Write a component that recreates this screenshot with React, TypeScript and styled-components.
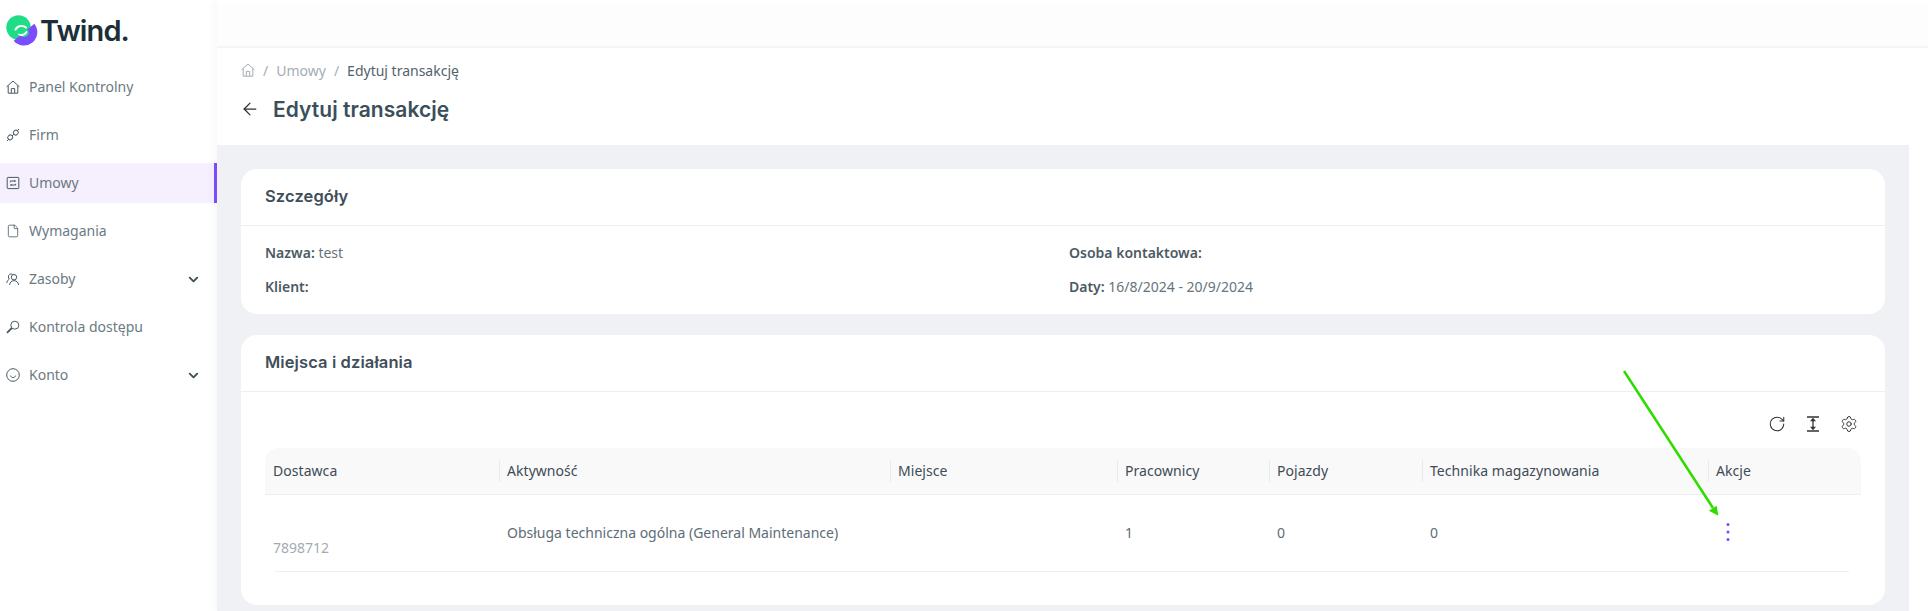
import React from 'react';
import styled, { createGlobalStyle } from 'styled-components';
import { ChevronDown, File, ArrowLeft, RotateCw, Settings } from 'lucide-react';

const GlobalStyle = createGlobalStyle`
    html, body {
        margin: 0;
        padding: 0;
        background: #fff;
    }
    body {
        font-family: 'Noto Sans', sans-serif;
        font-size: 13.5px;
        color: #5e6e78;
    }
`

const Page = styled.div`
    position: relative;
    display: flex;
    width: 1928px;
    height: 611px;
    overflow: hidden;
    background: #fff;
`

const Sidebar = styled.aside`
    width: 217px;
    flex-shrink: 0;
    box-sizing: border-box;
    background: #fff;
`

const LogoRow = styled.div`
    display: flex;
    align-items: center;
    gap: 0;
    height: 63px;
    padding: 0 0 2px 6px;
    box-sizing: border-box;
`

const LogoText = styled.span`
    font-family: 'Inter', sans-serif;
    font-weight: 600;
    font-size: 29px;
    letter-spacing: -0.9px;
    color: #1b2f38;
`

const Nav = styled.nav`
    display: flex;
    flex-direction: column;
    gap: 8px;
    padding-top: 4px;
`

const NavItem = styled.div<{ $active?: boolean }>`
    display: flex;
    align-items: center;
    height: 40px;
    box-sizing: border-box;
    padding: 0 13px 0 6px;
    gap: 9px;
    font-size: 14px;
    color: #6c7a82;
    background: ${(p) => (p.$active ? '#f5effe' : 'transparent')};
    border-right: 3px solid ${(p) => (p.$active ? '#7c4dff' : 'transparent')};
`

const NavIcon = styled.svg`
    width: 14px;
    height: 14px;
    flex-shrink: 0;
    fill: none;
    stroke: #4a5962;
    stroke-width: 1;
`

const NavLabel = styled.span`
    flex: 1;
    padding-bottom: 2px;
`

const Main = styled.main`
    flex: 1;
    min-width: 0;
    display: flex;
    flex-direction: column;
    box-shadow: -4px 0 8px rgba(60, 70, 90, 0.03);
`

const TopBar = styled.header`
    height: 44px;
    box-sizing: border-box;
    margin-top: 4px;
    background: #fdfdfd;
    border-bottom: 2px solid #f4f4f6;
`

const PageHead = styled.div`
    height: 97px;
    box-sizing: border-box;
    padding: 12px 0 0 24px;
    background: #fff;
`

const Crumbs = styled.div`
    display: flex;
    align-items: center;
    height: 20px;
    font-size: 14px;
    color: #a4adb4;
`

const Crumb = styled.span<{ $current?: boolean }>`
    color: ${(p) => (p.$current ? '#53626c' : '#a4adb4')};
`

const CrumbSep = styled.span`
    margin: 0 8px;
`

const TitleRow = styled.div`
    display: flex;
    align-items: center;
    gap: 13px;
    margin: 14px 0 0 -1px;
    height: 30px;
`

const Title = styled.h1`
    margin: 0;
    font-family: 'Inter', sans-serif;
    font-weight: 600;
    font-size: 21px;
    letter-spacing: 0.05px;
    color: #3b4f5b;
`

const Content = styled.div`
    flex: 1;
    width: 1692px;
    box-sizing: border-box;
    padding: 24px 24px 0;
    background: #eff1f5;
    display: flex;
    flex-direction: column;
    gap: 21px;
`

const Card = styled.section<{ $height: number }>`
    height: ${(p) => p.$height}px;
    box-sizing: border-box;
    background: #fff;
    border-radius: 16px;
`

const CardHead = styled.div`
    display: flex;
    align-items: center;
    height: 57px;
    box-sizing: border-box;
    padding: 0 0 2px 24px;
    border-bottom: 1px solid #eeeff2;
`

const CardTitle = styled.h2`
    margin: 0;
    font-family: 'Inter', sans-serif;
    font-weight: 600;
    font-size: 16.5px;
    letter-spacing: 0.1px;
    color: #3f4e59;
`

const Details = styled.div`
    display: grid;
    grid-template-columns: 804px 1fr;
    grid-auto-rows: 34px;
    align-items: center;
    padding: 9px 24px 0;
    font-size: 14px;
    color: #66747d;
`

const Key = styled.b`
    font-weight: 600;
    color: #4c5a64;
`

const TableWrap = styled.div`
    padding: 0 24px;
`

const Tools = styled.div`
    display: flex;
    justify-content: flex-end;
    align-items: center;
    gap: 18px;
    height: 56px;
    box-sizing: border-box;
    padding: 8px 3px 0 0;
    color: #333;
`

const Grid = styled.div`
    display: grid;
    grid-template-columns: 234px 391px 227px 152px 153px 286px 153px;
`

const HeadRow = styled(Grid)`
    height: 47px;
    box-sizing: border-box;
    background: #f9f9fa;
    border-bottom: 1px solid #eeeff2;
    border-radius: 14px 14px 0 0;
    align-items: center;
    color: #3f4b55;
    font-size: 14px;
    letter-spacing: 0.05px;
`

const HeadCell = styled.div<{ $first?: boolean }>`
    height: 22px;
    line-height: 22px;
    padding-left: 7px;
    border-left: 1px solid ${(p) => (p.$first ? 'transparent' : '#e9eaed')};
`

const BodyRow = styled(Grid)`
    height: 77px;
    box-sizing: border-box;
    padding-bottom: 2px;
    align-items: center;
    font-size: 14px;
    color: #5d6c76;
    position: relative;

    &::after {
        content: '';
        position: absolute;
        left: 10px;
        right: 12px;
        bottom: 0;
        height: 1px;
        background: #eeeff2;
    }
`

const BodyCell = styled.div`
    padding-left: 8px;
`

const SupplierCell = styled(BodyCell)`
    color: #a3abb2;
    padding-top: 30px;
`

const ActionCell = styled(BodyCell)`
    display: flex;
    padding: 0 0 2px 17px;
`

// zielona strzalka narysowana na screenshocie
const Annotation = styled.svg`
    position: absolute;
    left: 1615px;
    top: 360px;
    width: 120px;
    height: 170px;
    pointer-events: none;
`

const Logo = () => (
    <svg width="34" height="32" viewBox="0 0 34 32">
        <circle cx="12.500" cy="12.500" r="12.200" fill="#1fdc87" />
        <path d="M25 11.500A8.800 8.800 0 1 1 11 23" fill="none" stroke="#7c4dff" strokeWidth="8.500" />
        <path d="M9.500 14.500C11.500 10.500 17 10 20 12.500" fill="none" stroke="#fff" strokeWidth="2" strokeLinecap="round" />
        <path d="M13 19.500C16 20.500 19 19.500 20.500 17" fill="none" stroke="#fff" strokeWidth="1.800" strokeLinecap="round" />
    </svg>
)

const HomeIcon = ({ color }: { color?: string }) => (
    <NavIcon viewBox="0 0 14 14" style={color ? { stroke: color } : undefined}>
        <path d="M.6 6.800 7 1l6.400 5.800M2.200 5.600v7.600h9.600V5.600M5.300 13.200V8.600h3.400v4.600" />
    </NavIcon>
)

const PlugIcon = () => (
    <NavIcon viewBox="0 0 14 14">
        <path d="M1 13l1.800-1.800M13 1l-1.800 1.800" />
        <rect x="1.800" y="7.200" width="4.800" height="4.400" rx="1.800" transform="rotate(-45 4.200 9.400)" />
        <rect x="7.400" y="2.400" width="4.800" height="4.400" rx="1.800" transform="rotate(-45 9.800 4.600)" />
        <path d="M6 8l2-2" />
    </NavIcon>
)

const ContractIcon = () => (
    <NavIcon viewBox="0 0 14 14">
        <rect x="1.200" y="1.400" width="11.600" height="11.200" rx="0.800" />
        <path d="M4.400 6.200V5h5M8.400 4l1 1-1 1M9.600 7.800V9h-5M5.600 10l-1-1 1-1" />
    </NavIcon>
)

const PeopleIcon = () => (
    <NavIcon viewBox="0 0 14 14">
        <circle cx="8" cy="5.200" r="2.700" />
        <path d="M3.600 13c.3-2.600 2-4.400 4.400-4.400s4.200 1.800 4.600 4.400M6.600 2.400A2.700 2.700 0 0 0 2.400 5c0 .8.400 1.500 1 2C1.800 8 1 9.400.8 11" />
    </NavIcon>
)

const KeyIcon = () => (
    <NavIcon viewBox="0 0 14 14">
        <circle cx="8.800" cy="5.200" r="4" />
        <path d="M5.800 8 1 12.800" strokeWidth="1.800" />
    </NavIcon>
)

const SmileIcon = () => (
    <NavIcon viewBox="0 0 14 14">
        <circle cx="7" cy="7" r="6.300" />
        <path d="M4.400 7.600c.6 1.400 1.500 2 2.600 2s2-.6 2.600-2" />
    </NavIcon>
)

const HeightIcon = () => (
    <svg width="18" height="18" viewBox="0 0 18 18" fill="none" stroke="#333" strokeWidth="1.300">
        <path d="M3 2h12M3 16h12M9 4.500v9" />
        <path d="M7.500 5.500 9 3.800 10.500 5.500zM7.500 12.500 9 14.200 10.500 12.500z" fill="#333" />
    </svg>
)

const Dots = () => (
    <svg width="6" height="20" viewBox="0 0 6 20" fill="#7c4dff">
        <circle cx="3" cy="2.500" r="1.500" />
        <circle cx="3" cy="10" r="1.500" />
        <circle cx="3" cy="17.500" r="1.500" />
    </svg>
)

const navItems = [
    { label: 'Panel Kontrolny', icon: <HomeIcon /> },
    { label: 'Firm', icon: <PlugIcon /> },
    { label: 'Umowy', icon: <ContractIcon />, active: true },
    { label: 'Wymagania', icon: <File size={14} strokeWidth={1.300} color="#3f4f58" /> },
    { label: 'Zasoby', icon: <PeopleIcon />, arrow: true },
    { label: 'Kontrola dostępu', icon: <KeyIcon /> },
    { label: 'Konto', icon: <SmileIcon />, arrow: true },
]

const columns = ['Dostawca', 'Aktywność', 'Miejsce', 'Pracownicy', 'Pojazdy', 'Technika magazynowania', 'Akcje']

function App() {
    return (
        <Page>
            <GlobalStyle />
            <Sidebar>
                <LogoRow>
                    <Logo />
                    <LogoText>Twind.</LogoText>
                </LogoRow>
                <Nav>
                    {navItems.map((item) => (
                        <NavItem key={item.label} $active={item.active}>
                            {item.icon}
                            <NavLabel>{item.label}</NavLabel>
                            {item.arrow && <ChevronDown size={15} strokeWidth={3} color="#3f4f58" />}
                        </NavItem>
                    ))}
                </Nav>
            </Sidebar>
            <Main>
                <TopBar />
                <PageHead>
                    <Crumbs>
                        <HomeIcon color="#a4adb4" />
                        <CrumbSep>/</CrumbSep>
                        <Crumb>Umowy</Crumb>
                        <CrumbSep>/</CrumbSep>
                        <Crumb $current>Edytuj transakcję</Crumb>
                    </Crumbs>
                    <TitleRow>
                        <ArrowLeft size={20} strokeWidth={1.500} color="#2b2f33" />
                        <Title>Edytuj transakcję</Title>
                    </TitleRow>
                </PageHead>
                <Content>
                    <Card $height={145}>
                        <CardHead>
                            <CardTitle>Szczegóły</CardTitle>
                        </CardHead>
                        <Details>
                            <div><Key>Nazwa:</Key> test</div>
                            <div><Key>Osoba kontaktowa:</Key></div>
                            <div><Key>Klient:</Key></div>
                            <div><Key>Daty:</Key> 16/8/2024 - 20/9/2024</div>
                        </Details>
                    </Card>
                    <Card $height={270}>
                        <CardHead>
                            <CardTitle>Miejsca i działania</CardTitle>
                        </CardHead>
                        <TableWrap>
                            <Tools>
                                <RotateCw size={18} strokeWidth={1.400} />
                                <HeightIcon />
                                <Settings size={18} strokeWidth={1.300} />
                            </Tools>
                            <HeadRow>
                                {columns.map((c, i) => (
                                    <HeadCell key={c} $first={i === 0}>{c}</HeadCell>
                                ))}
                            </HeadRow>
                            <BodyRow>
                                <SupplierCell>7898712</SupplierCell>
                                <BodyCell>Obsługa techniczna ogólna (General Maintenance)</BodyCell>
                                <BodyCell />
                                <BodyCell>1</BodyCell>
                                <BodyCell>0</BodyCell>
                                <BodyCell>0</BodyCell>
                                <ActionCell><Dots /></ActionCell>
                            </BodyRow>
                        </TableWrap>
                    </Card>
                </Content>
            </Main>
            <Annotation viewBox="0 0 120 170">
                <path d="M9 11 L98 148" stroke="#2fdc00" strokeWidth="2.500" fill="none" />
                <path d="M103.300 155.700 L94 150.700 L101.700 145.700 z" fill="#2fdc00" />
            </Annotation>
        </Page>
    );
}
export default App;
